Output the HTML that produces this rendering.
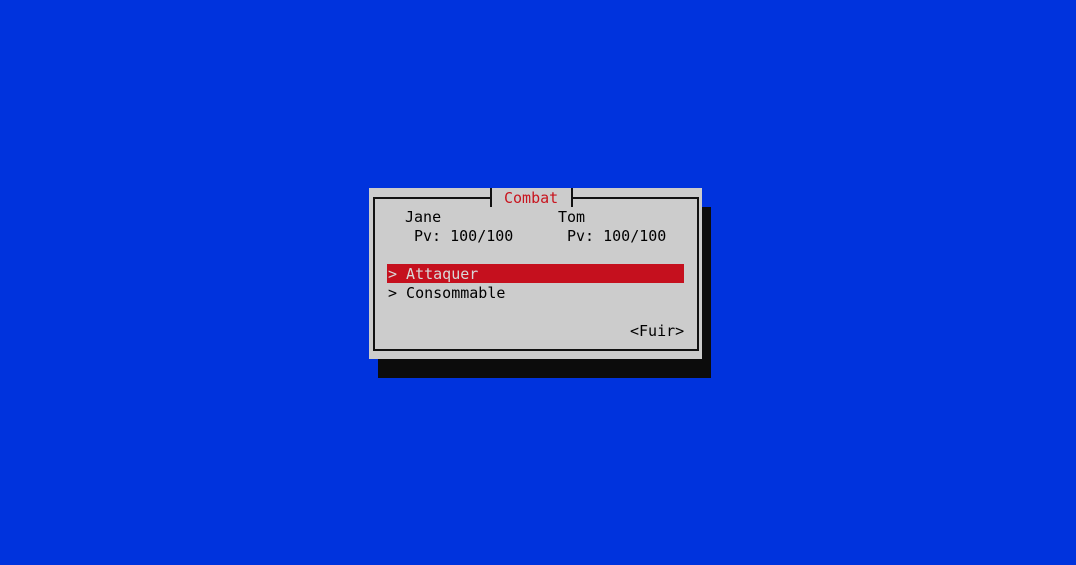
<!DOCTYPE html>
<html><head><style>
body{margin:0;width:1076px;height:565px;background:#0033dd;position:relative;overflow:hidden;font-family:"DejaVu Sans Mono",monospace;font-size:15px;}
.a{position:absolute}
.t{position:absolute;line-height:19px;height:19px;white-space:pre;color:#000;margin-top:1px}
</style></head><body>
<div class="a" style="left:378px;top:207px;width:333px;height:171px;background:#0c0c0c"></div>
<div class="a" style="left:369px;top:188px;width:333px;height:171px;background:#cccccc"></div>
<div class="a" style="left:373px;top:197px;width:322px;height:150px;border:2px solid #111"></div>
<div class="a" style="left:490px;top:188px;width:83px;height:19px;background:#cccccc;border-left:2px solid #111;border-right:2px solid #111;box-sizing:border-box"></div>
<div class="t" style="left:504px;top:188px;color:#c8141e">Combat</div>
<div class="t" style="left:405px;top:207px">Jane</div>
<div class="t" style="left:558px;top:207px">Tom</div>
<div class="t" style="left:414px;top:226px">Pv: 100/100</div>
<div class="t" style="left:567px;top:226px">Pv: 100/100</div>
<div class="a" style="left:387px;top:264px;width:297px;height:19px;background:#c5101e"></div>
<div class="t" style="left:388px;top:264px;color:#d8d8d8">&gt; Attaquer</div>
<div class="t" style="left:388px;top:283px">&gt; Consommable</div>
<div class="t" style="left:630px;top:321px">&lt;Fuir&gt;</div>
</body></html>
